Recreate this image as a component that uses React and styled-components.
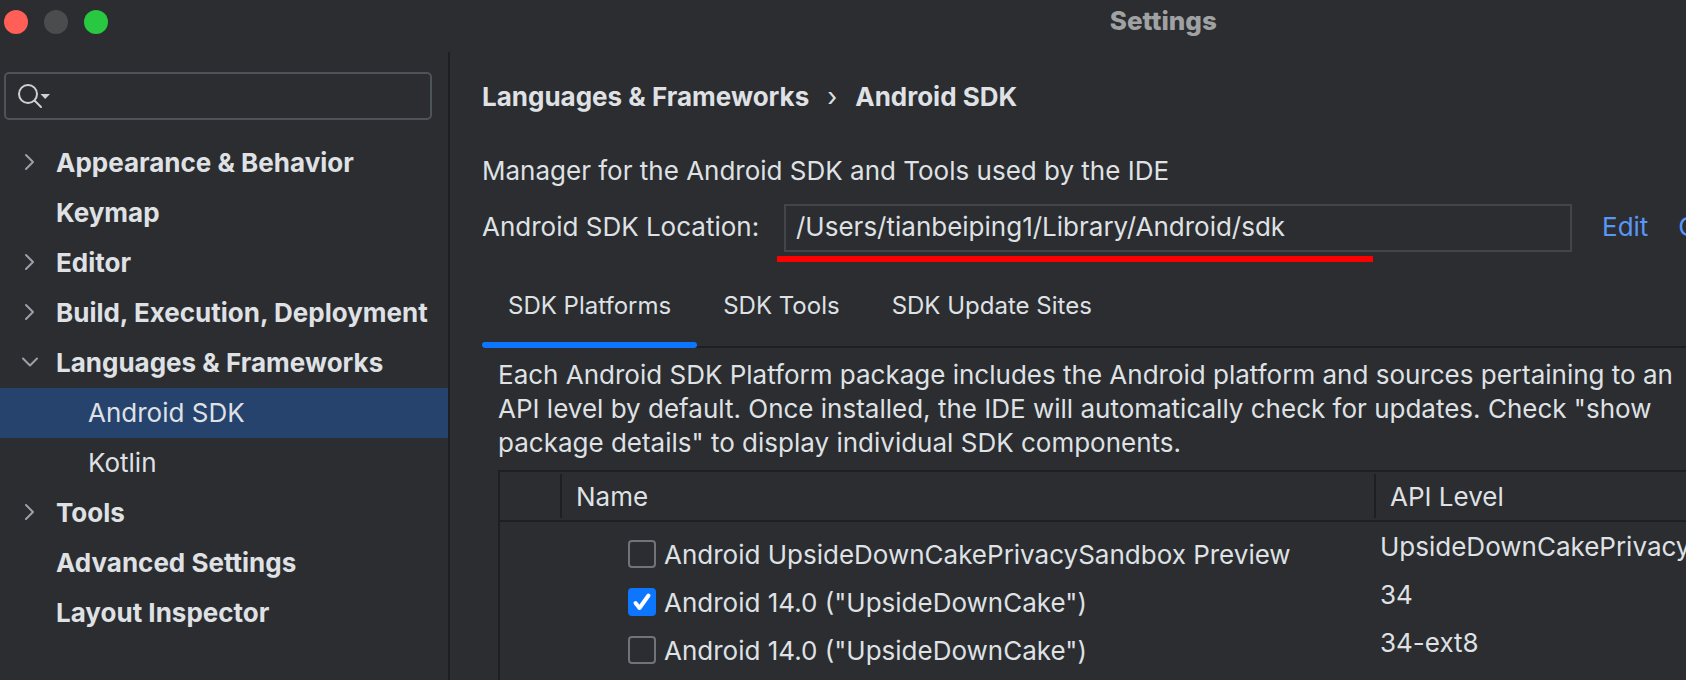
import React, { useState } from 'react';
import styled, { createGlobalStyle, css } from 'styled-components';

const color = {
  surface: '#2b2d30',
  line: '#1e1f22',
  text: '#dfe1e5',
  muted: '#9da0a8',
  title: '#a0a1a3',
  field: '#43454a',
  searchBorder: '#4c5359',
  boxBorder: '#6f737a',
  accent: '#0d76ff',
  link: '#5896f8',
  selected: '#26436e',
};

const GlobalStyle = createGlobalStyle`
  *, *::before, *::after { box-sizing: border-box; }
  body {
    margin: 0;
    background: ${color.surface};
    color: ${color.text};
    font-family: Inter, "Liberation Sans", sans-serif;
    font-size: 26px;
    line-height: 34px;
  }
  button, input { font: inherit; color: inherit; }
`;

const Window = styled.div`
  display: flex;
  flex-direction: column;
  min-height: 100vh;
  overflow: hidden;
`;

/* The window is wider than the viewport, so the centred title follows its full width. */
const TitleBar = styled.header`
  display: grid;
  grid-template-columns: 1fr auto 1fr;
  align-items: center;
  width: 138%;
  height: 52px;
  padding: 0 4px 8px;
`;

const Lights = styled.div`
  display: flex;
  gap: 16px;
`;

const Light = styled.button`
  width: 24px;
  height: 24px;
  padding: 0;
  border: 0;
  border-radius: 50%;
  background: ${(p) => p.$fill};
`;

const Title = styled.h1`
  margin: 0;
  padding-bottom: 2px;
  font-size: 26px;
  line-height: 32px;
  font-weight: 800;
  color: ${color.title};
`;

const Body = styled.div`
  display: flex;
  flex: 1;
`;

const Sidebar = styled.aside`
  flex: none;
  width: 450px;
  padding-top: 20px;
  border-right: 2px solid ${color.line};
`;

const SearchBox = styled.label`
  display: flex;
  align-items: center;
  gap: 8px;
  height: 48px;
  margin: 0 16px 18px 4px;
  padding: 0 12px;
  border: 2px solid ${color.searchBorder};
  border-radius: 5px;
`;

const SearchInput = styled.input`
  flex: 1;
  min-width: 0;
  padding: 0;
  border: 0;
  outline: 0;
  background: transparent;
`;

const Tree = styled.ul`
  margin: 0;
  padding: 0;
  list-style: none;
`;

const TreeItem = styled.button`
  display: flex;
  align-items: center;
  width: 100%;
  height: 50px;
  padding: 0 0 0 ${(p) => (p.$child ? 52 : 20)}px;
  border: 0;
  background: ${(p) => (p.$selected ? color.selected : 'transparent')};
  font-weight: ${(p) => (p.$child ? 400 : 700)};
  text-align: left;
  white-space: nowrap;
`;

const Twisty = styled.span`
  display: flex;
  width: 36px;
`;

const Main = styled.main`
  display: flex;
  flex-direction: column;
  flex: 1;
  min-width: 0;
  padding: 28px 0 0 32px;
`;

const Breadcrumb = styled.nav`
  display: flex;
  align-items: center;
  gap: 18px;
  margin-bottom: 40px;
  font-weight: 700;
`;

const Separator = styled.span`
  font-weight: 400;
`;

const Intro = styled.p`
  margin: 0 0 16px;
`;

const LocationRow = styled.div`
  display: flex;
  position: relative;
  height: 48px;
  line-height: 46px;
  white-space: nowrap;
`;

const LocationLabel = styled.label`
  width: 302px;
`;

const LocationInput = styled.input`
  flex: 1;
  min-width: 0;
  height: 48px;
  padding: 0 10px 4px;
  border: 2px solid ${color.field};
  outline: 0;
  background: transparent;
`;

const Links = styled.div`
  display: flex;
  gap: 30px;
  width: 84px;
  margin-left: 30px;
  overflow: hidden;
`;

const Link = styled.a`
  color: ${color.link};
  text-decoration: none;
`;

/* Red marker laid over the form under the path. */
const Marker = styled.span`
  position: absolute;
  top: 52px;
  left: 295px;
  width: 596px;
  height: 6px;
  background: #ff0000;
`;

const Tabs = styled.div`
  display: flex;
  height: 80px;
  margin-top: 16px;
  border-bottom: 2px solid ${color.line};
`;

const Tab = styled.button`
  position: relative;
  height: 80px;
  padding: 0 26px 4px;
  border: 0;
  background: transparent;
  font-size: 24px;
  ${(p) =>
    p.$active &&
    css`
      &::after {
        content: '';
        position: absolute;
        left: 0;
        right: 0;
        bottom: 0;
        height: 6px;
        border-radius: 3px;
        background: ${color.accent};
      }
    `}
`;

const Panel = styled.section`
  display: flex;
  flex-direction: column;
  flex: 1;
  padding: 10px 0 0 16px;
`;

const Description = styled.p`
  margin: 0 0 10px;
  white-space: nowrap;
`;

const TableFrame = styled.div`
  flex: 1;
  border: solid ${color.line};
  border-width: 2px 0 0 2px;
`;

const Table = styled.table`
  width: 100%;
  table-layout: fixed;
  border-collapse: separate;
  border-spacing: 0;
`;

const HeadCell = styled.th`
  width: ${(p) => p.$width || 'auto'};
  height: 50px;
  padding: 0;
  border-bottom: 2px solid ${color.line};
  font-weight: 400;
  text-align: left;
`;

const HeadLabel = styled.div`
  height: 44px;
  padding: 6px 0 0 14px;
  border-left: 2px solid ${color.line};
`;

const Cell = styled.td`
  height: 48px;
  padding: 2px 0 0 6px;
  overflow: hidden;
  white-space: nowrap;
`;

const NameCell = styled(Cell)`
  padding: 16px 0 0 68px;
`;

const PackageLabel = styled.label`
  display: flex;
  align-items: center;
  gap: 8px;
  height: 32px;
`;

const PackageName = styled.span`
  padding-top: 2px;
`;

const Checkbox = styled.input`
  flex: none;
  appearance: none;
  width: 28px;
  height: 28px;
  margin: 0;
  border: 2px solid ${color.boxBorder};
  border-radius: 4px;
  &:checked {
    border-color: ${color.accent};
    background: ${color.accent};
  }
`;

const CheckWrap = styled.span`
  display: grid;
  > * { grid-area: 1 / 1; }
  svg { pointer-events: none; }
`;

function Chevron({ open }) {
  return (
    <svg width="20" height="20" viewBox="0 0 20 20" fill="none" stroke={color.muted} strokeWidth="2" strokeLinecap="round" strokeLinejoin="round" aria-hidden="true">
      <path d={open ? 'M3 5.500 10 12.500 17 5.500' : 'M6 2 13 9 6 16'} />
    </svg>
  );
}

function SearchIcon() {
  return (
    <svg width="32" height="26" viewBox="0 0 32 26" fill="none" stroke="#ced0d6" strokeWidth="2" strokeLinecap="round" aria-hidden="true">
      <circle cx="10" cy="11" r="9" />
      <path d="M16.500 17.500 23 24" />
      <path d="M22.500 11H32l-4.800 5z" fill="#ced0d6" stroke="none" />
    </svg>
  );
}

function CheckMark() {
  return (
    <svg width="28" height="28" viewBox="0 0 28 28" fill="none" stroke="#fff" strokeWidth="4" strokeLinecap="round" strokeLinejoin="round" aria-hidden="true">
      <path d="M7.500 15 11.500 20 20.500 7.500" />
    </svg>
  );
}

const tree = [
  { label: 'Appearance & Behavior', open: false },
  { label: 'Keymap' },
  { label: 'Editor', open: false },
  { label: 'Build, Execution, Deployment', open: false },
  { label: 'Languages & Frameworks', open: true },
  { label: 'Android SDK', child: true },
  { label: 'Kotlin', child: true },
  { label: 'Tools', open: false },
  { label: 'Advanced Settings' },
  { label: 'Layout Inspector' },
];

const packages = [
  { name: 'Android UpsideDownCakePrivacySandbox Preview', api: 'UpsideDownCakePrivacySandbox', installed: false },
  { name: 'Android 14.0 ("UpsideDownCake")', api: '34', installed: true },
  { name: 'Android 14.0 ("UpsideDownCake")', api: '34-ext8', installed: false },
];

const tabs = ['SDK Platforms', 'SDK Tools', 'SDK Update Sites'];

export default function App() {
  const [page, setPage] = useState('Android SDK');
  const [tab, setTab] = useState(tabs[0]);
  const [checked, setChecked] = useState(packages.map((p) => p.installed));
  const toggle = (i) => setChecked(checked.map((c, n) => (n === i ? !c : c)));

  return (
    <>
      <GlobalStyle />
      <Window>
        <TitleBar>
          <Lights>
            <Light $fill="#ff5f57" aria-label="Close" />
            <Light $fill="#4b4c4d" aria-label="Minimize" />
            <Light $fill="#28c840" aria-label="Zoom" />
          </Lights>
          <Title>Settings</Title>
        </TitleBar>
        <Body>
          <Sidebar>
            <SearchBox>
              <SearchIcon />
              <SearchInput type="text" aria-label="Search settings" />
            </SearchBox>
            <Tree>
              {tree.map((item) => (
                <li key={item.label}>
                  <TreeItem $child={item.child} $selected={item.label === page} onClick={() => setPage(item.label)}>
                    <Twisty>{item.open !== undefined && <Chevron open={item.open} />}</Twisty>
                    {item.label}
                  </TreeItem>
                </li>
              ))}
            </Tree>
          </Sidebar>
          <Main>
            <Breadcrumb aria-label="Breadcrumb">
              <span>Languages &amp; Frameworks</span>
              <Separator>›</Separator>
              <span>Android SDK</span>
            </Breadcrumb>
            <Intro>Manager for the Android SDK and Tools used by the IDE</Intro>
            <LocationRow>
              <LocationLabel htmlFor="sdk-location">Android SDK Location:</LocationLabel>
              <LocationInput id="sdk-location" type="text" readOnly value="/Users/tianbeiping1/Library/Android/sdk" />
              <Links>
                <Link href="#edit">Edit</Link>
                <Link href="#optimize">Optimize disk space</Link>
              </Links>
              <Marker />
            </LocationRow>
            <Tabs role="tablist">
              {tabs.map((name) => (
                <Tab key={name} role="tab" aria-selected={name === tab} $active={name === tab} onClick={() => setTab(name)}>
                  {name}
                </Tab>
              ))}
            </Tabs>
            <Panel>
              <Description>
                Each Android SDK Platform package includes the Android platform and sources pertaining to an
                <br />
                API level by default. Once installed, the IDE will automatically check for updates. Check "show
                <br />
                package details" to display individual SDK components.
              </Description>
              <TableFrame>
                <Table>
                  <thead>
                    <tr>
                      <HeadCell $width="60px" aria-label="Status" />
                      <HeadCell><HeadLabel>Name</HeadLabel></HeadCell>
                      <HeadCell $width="312px"><HeadLabel>API Level</HeadLabel></HeadCell>
                    </tr>
                  </thead>
                  <tbody>
                    {packages.map((p, i) => (
                      <tr key={p.api}>
                        <Cell />
                        <NameCell>
                          <PackageLabel>
                            <CheckWrap>
                              <Checkbox type="checkbox" checked={checked[i]} onChange={() => toggle(i)} />
                              {checked[i] && <CheckMark />}
                            </CheckWrap>
                            <PackageName>{p.name}</PackageName>
                          </PackageLabel>
                        </NameCell>
                        <Cell>{p.api}</Cell>
                      </tr>
                    ))}
                  </tbody>
                </Table>
              </TableFrame>
            </Panel>
          </Main>
        </Body>
      </Window>
    </>
  );
}
